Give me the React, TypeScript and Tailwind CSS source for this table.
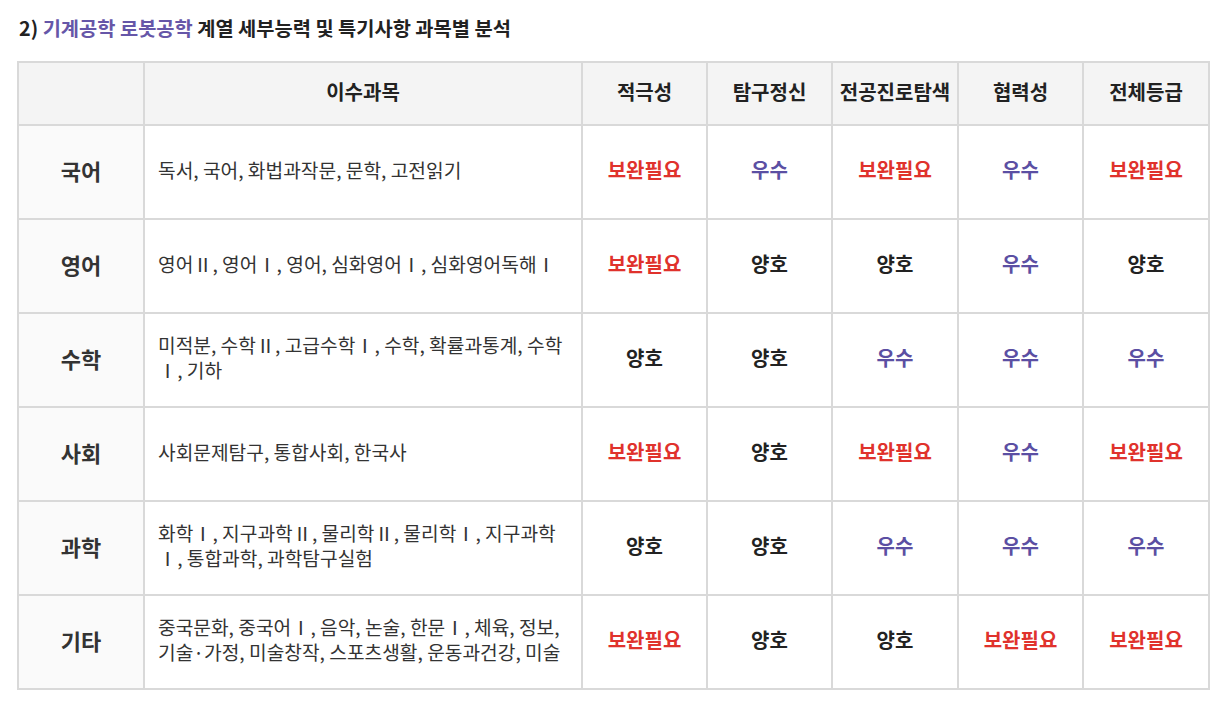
import React from "react";

type G = "보완필요" | "우수" | "양호";

const rows: { label: string; subjects: string; grades: G[] }[] = [
  { label: "국어", subjects: "독서, 국어, 화법과작문, 문학, 고전읽기", grades: ["보완필요", "우수", "보완필요", "우수", "보완필요"] },
  { label: "영어", subjects: "영어Ⅱ, 영어Ⅰ, 영어, 심화영어Ⅰ, 심화영어독해Ⅰ", grades: ["보완필요", "양호", "양호", "우수", "양호"] },
  { label: "수학", subjects: "미적분, 수학Ⅱ, 고급수학Ⅰ, 수학, 확률과통계, 수학Ⅰ, 기하", grades: ["양호", "양호", "우수", "우수", "우수"] },
  { label: "사회", subjects: "사회문제탐구, 통합사회, 한국사", grades: ["보완필요", "양호", "보완필요", "우수", "보완필요"] },
  { label: "과학", subjects: "화학Ⅰ, 지구과학Ⅱ, 물리학Ⅱ, 물리학Ⅰ, 지구과학Ⅰ, 통합과학, 과학탐구실험", grades: ["양호", "양호", "우수", "우수", "우수"] },
  { label: "기타", subjects: "중국문화, 중국어Ⅰ, 음악, 논술, 한문Ⅰ, 체육, 정보, 기술·가정, 미술창작, 스포츠생활, 운동과건강, 미술", grades: ["보완필요", "양호", "양호", "보완필요", "보완필요"] },
];

const headers = ["적극성", "탐구정신", "전공진로탐색", "협력성", "전체등급"];

function gradeClass(g: G) {
  if (g === "보완필요") return "text-[#e0322c]";
  if (g === "우수") return "text-[#5b4fa3]";
  return "text-[#222222]";
}

export default function App() {
  return (
    <div
      className="w-[1216px] h-[702px] bg-white text-[#222222]"
      style={{ fontFamily: '"Noto Sans CJK KR", "Noto Sans", sans-serif' }}
    >
      <div className="pl-[19px] pt-[14px] h-[61px]">
        <h2 className="text-[19.8px] font-bold leading-[28px] text-[#222222]">
          2) <span className="text-[#6656a8]">기계공학 로봇공학</span> 계열 세부능력 및 특기사항 과목별 분석
        </h2>
      </div>
      <div className="pl-[17px]">
        <table className="table-fixed border-collapse w-[1191px] border-2 border-[#d9d9d9]">
          <colgroup>
            <col className="w-[126px]" />
            <col className="w-[438px]" />
            <col className="w-[125px]" />
            <col className="w-[125px]" />
            <col className="w-[126px]" />
            <col className="w-[125px]" />
            <col className="w-[126px]" />
          </colgroup>
          <thead>
            <tr className="h-[63px] bg-[#f4f4f4]">
              <th className="border-2 border-[#d9d9d9] pb-[4px]"></th>
              <th className="border-2 border-[#d9d9d9] pb-[4px] text-[20px] font-bold text-center">이수과목</th>
              {headers.map((h) => (
                <th key={h} className="border-2 border-[#d9d9d9] pb-[4px] text-[20px] font-bold text-center whitespace-nowrap">
                  {h}
                </th>
              ))}
            </tr>
          </thead>
          <tbody>
            {rows.map((r) => (
              <tr key={r.label} className="h-[94px]">
                <td className="border-2 border-[#d9d9d9] pb-[4px] bg-[#fafafa] text-center text-[22px] font-semibold text-[#333333]">{r.label}</td>
                <td className="border-2 border-[#d9d9d9] pb-[4px] pl-[13px] pr-[8px] text-[19.2px] leading-[25px] text-[#333333]">
                  {r.subjects}
                </td>
                {r.grades.map((g, i) => (
                  <td key={i} className={`border-2 border-[#d9d9d9] pb-[4px] text-center text-[20px] font-semibold ${gradeClass(g)}`}>
                    {g}
                  </td>
                ))}
              </tr>
            ))}
          </tbody>
        </table>
      </div>
    </div>
  );
}
